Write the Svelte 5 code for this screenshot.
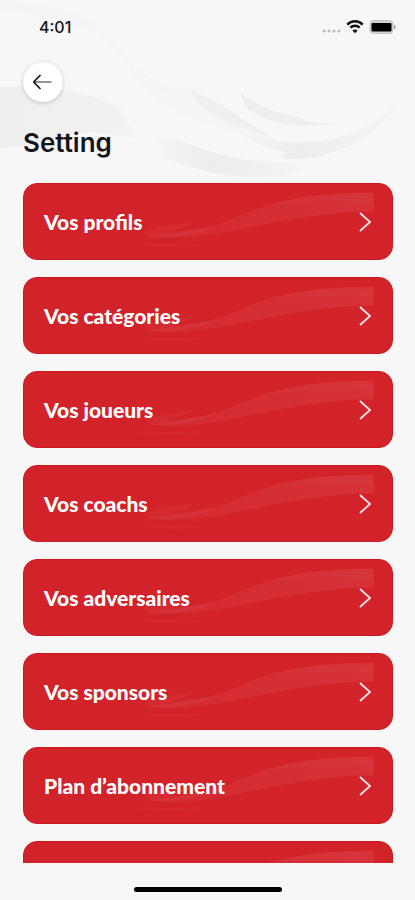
<script>
  const items = [
    'Vos profils',
    'Vos catégories',
    'Vos joueurs',
    'Vos coachs',
    'Vos adversaires',
    'Vos sponsors',
    'Plan d’abonnement',
    ''
  ];
</script>

<div class="screen">
  <svg class="backdrop" viewBox="0 0 415 190" preserveAspectRatio="none" aria-hidden="true">
    <defs>
      <linearGradient id="wash" x1="0" x2="1" y1="0" y2="0">
        <stop offset="0" stop-color="#efeff0" />
        <stop offset="0.75" stop-color="#f1f1f2" />
        <stop offset="1" stop-color="#f6f6f7" />
      </linearGradient>
      <linearGradient id="tail" x1="0" x2="1" y1="0" y2="0">
        <stop offset="0" stop-color="#f4f4f5" />
        <stop offset="0.4" stop-color="#ededee" />
        <stop offset="1" stop-color="#f4f4f5" />
      </linearGradient>
    </defs>
    <path d="M0 87C40 85 92 92 116 106C132 116 122 132 150 138C125 139 98 128 74 134C46 140 22 148 0 148Z" fill="url(#wash)" />
    <path d="M0 0C34 2 70 8 92 22C124 43 128 70 158 86C186 99 214 113 240 133C194 123 146 104 130 68C110 28 48 12 0 13Z" fill="#f5f5f6" />
    <path d="M135 64C150 86 178 88 192 89C208 100 232 110 244 122C250 130 268 134 282 144C238 136 210 116 188 98C168 94 148 88 135 64Z" fill="#f4f4f5" />
    <path d="M190 88C204 98 225 104 238 116C249 126 262 128 270 137C245 130 218 120 200 105Z" fill="#efeff0" />
    <path d="M240 91C252 105 275 112 298 117C310 124 328 125 350 121C320 129 280 127 256 114C245 110 243 101 240 91Z" fill="#eeeeef" />
    <path d="M236 131C285 148 330 146 366 127C382 118 390 108 398 103C386 124 362 143 334 152C316 159 299 160 280 158L284 151C265 149 250 142 236 131Z" fill="url(#tail)" />
    <path d="M152 138C164 142 172 140 178 139C204 151 234 160 270 162C282 164 296 162 304 169C290 175 264 179 234 176C201 172 184 164 165 159C168 153 160 146 152 138Z" fill="url(#tail)" />
  </svg>

  <div class="status">
    <span class="time">4:01</span>
    <div class="indicators" aria-hidden="true">
      <svg width="20" height="16" viewBox="0 0 20 16">
        <g fill="#b9b9b9">
          <circle cx="3" cy="12" r="1.5" />
          <circle cx="8" cy="12" r="1.5" />
          <circle cx="13" cy="12" r="1.5" />
          <circle cx="18" cy="12" r="1.5" />
        </g>
      </svg>
      <svg width="18" height="16" viewBox="0 0 18 16">
        <g fill="none" stroke="#111" stroke-width="2.4">
          <path d="M1.3 5.6C5.6 1.2 12.4 1.2 16.7 5.6" />
          <path d="M4.3 8.7C7 6 11 6 13.7 8.7" />
        </g>
        <path d="M9 14.2L6.4 11.6C8 10.1 10 10.1 11.6 11.6Z" fill="#111" />
      </svg>
      <svg width="28" height="16" viewBox="0 0 28 16">
        <rect x="1" y="1.5" width="23" height="13" rx="3.5" fill="#d4d4d4" stroke="#c4c4c4" />
        <rect x="2.5" y="4" width="20" height="8.4" rx="1" fill="#000" />
        <path d="M25 5.5C27.2 6.3 27.2 9.7 25 10.5Z" fill="#a5a5a5" />
      </svg>
    </div>
  </div>

  <header>
    <button class="back" type="button" aria-label="Retour">
      <svg width="20" height="16" viewBox="0 0 20 16" fill="none">
        <path d="M1.5 8H18.5" stroke="#888" stroke-width="1.8" />
        <path d="M7.5 1L0.7 8L7.5 15" stroke="#15151b" stroke-width="1.7" />
      </svg>
    </button>
    <h1>Setting</h1>
  </header>

  <nav>
    {#each items as item}
      <a class="card" href="#settings" aria-label={item || 'Suite'}>
        <svg class="brush" viewBox="0 0 370 77" preserveAspectRatio="none" aria-hidden="true">
          <defs>
            <linearGradient id="stroke" x1="0" x2="1" y1="0" y2="0">
              <stop offset="0" stop-color="#fff" stop-opacity="0.03" />
              <stop offset="1" stop-color="#fff" stop-opacity="0.07" />
            </linearGradient>
          </defs>
          <path d="M120 54C158 51 190 45 212 35C252 15 300 8 352 9V28C304 28 258 38 220 46C184 54 150 58 120 54Z" fill="url(#stroke)" />
          <path d="M236 24C270 12 310 8 350 12V20C308 17 270 20 236 24Z" fill="#fff" fill-opacity="0.015" />
          <path d="M120 49C134 45 150 41 169 39C170 43 158 45 146 49C162 48 180 45 194 43C178 51 151 56 128 54Z" fill="#fff" fill-opacity="0.04" />
          <path d="M112 62C140 61 162 62 184 63C160 65 134 64 112 62Z" fill="#fff" fill-opacity="0.03" />
        </svg>
        <span>{item}</span>
        <svg class="chevron" width="14" height="22" viewBox="0 0 14 22" fill="none" aria-hidden="true">
          <path d="M2 2L12 11L2 20" stroke="#ffe3e3" stroke-width="1.8" />
        </svg>
      </a>
    {/each}
  </nav>

  <footer><div class="home"></div></footer>
</div>

<style>
  :global(body) {
    margin: 0;
    background: #f7f7f7;
  }

  .screen {
    position: relative;
    display: flex;
    flex-direction: column;
    height: 100vh;
    overflow: hidden;
    background: #f7f7f7;
    color: #14141a;
    font-family: Inter, 'Liberation Sans', sans-serif;
  }

  .backdrop {
    position: absolute;
    top: 0;
    left: 0;
    width: 100%;
    height: 190px;
  }

  .status {
    position: relative;
    display: flex;
    flex: none;
    align-items: center;
    justify-content: space-between;
    height: 54px;
    padding: 0 18px 0 39px;
  }

  .time {
    font-size: 16px;
    font-weight: 500;
    line-height: 20px;
  }

  .indicators {
    display: flex;
    align-items: center;
    gap: 5px;
  }

  header {
    position: relative;
    flex: none;
    padding: 8px 23px 23px;
  }

  .back {
    display: flex;
    align-items: center;
    justify-content: center;
    width: 40px;
    height: 40px;
    padding: 0;
    border: 0;
    border-radius: 50%;
    background: #fff;
    box-shadow: 0 1px 4px rgba(0, 0, 0, 0.2);
  }

  h1 {
    margin: 24px 0 0;
    font-size: 26px;
    font-weight: 600;
    line-height: 34px;
  }

  nav {
    position: relative;
    display: flex;
    flex: 1;
    flex-direction: column;
    gap: 17px;
    min-height: 0;
    padding: 0 22px 0 23px;
    overflow: hidden;
  }

  .card {
    position: relative;
    display: flex;
    flex: none;
    align-items: center;
    justify-content: space-between;
    box-sizing: border-box;
    height: 77px;
    padding: 0 20px;
    overflow: hidden;
    border: 1px solid #cd1a20;
    border-radius: 14px;
    background: #d3232a;
    color: #fff;
    font-family: Lato, 'Liberation Sans', sans-serif;
    font-size: 21px;
    font-weight: 900;
    line-height: 24px;
    text-decoration: none;
  }

  .brush {
    position: absolute;
    inset: 0;
    width: 100%;
    height: 100%;
  }

  .card span,
  .chevron {
    position: relative;
  }

  footer {
    display: flex;
    flex: none;
    align-items: flex-end;
    justify-content: center;
    box-sizing: border-box;
    height: 37px;
    padding-bottom: 8px;
  }

  .home {
    width: 148px;
    height: 5px;
    border-radius: 3px;
    background: #000;
  }
</style>
